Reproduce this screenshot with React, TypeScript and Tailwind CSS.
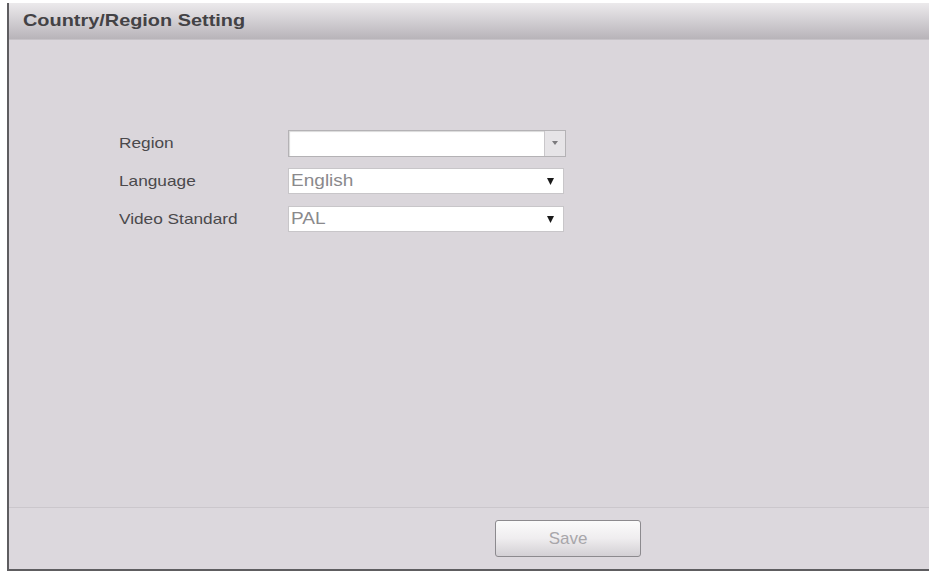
import React from "react";

function Tri({ color, w, h }: { color: string; w: number; h: number }) {
  return (
    <svg width={w} height={h} viewBox={`0 0 ${w} ${h}`}>
      <polygon points={`0,0 ${w},0 ${w / 2},${h}`} fill={color} />
    </svg>
  );
}

export default function App() {
  return (
    <div
      className="w-[929px] h-[571px] bg-white pt-[3px] pl-[7px] overflow-hidden"
      style={{ fontFamily: '"Liberation Sans", Arial, sans-serif' }}
    >
      <div className="h-[568px] flex flex-col border-l-2 border-b-2 border-[#5e5d60]">
        {/* Header */}
        <div className="h-[37px] flex items-center pl-[14px] bg-gradient-to-b from-[#eceaec] via-[#d2cfd3] to-[#b8b4b9] border-b border-[#c6c2c7]">
          <span className="inline-block origin-left scale-x-[1.17] text-[17px] font-bold text-[#434245]">
            Country/Region Setting
          </span>
        </div>

        {/* Body */}
        <div className="flex-1 bg-[#dad6db] pt-[90px] pl-[110px] flex flex-col gap-[12px]">
          <div className="flex items-center h-[26px]">
            <span className="w-[169px]">
              <span className="inline-block origin-left scale-x-[1.15] text-[15px] text-[#4a494c]">Region</span>
            </span>
            <div className="flex h-[27px] w-[278px] border border-[#b4b2b5] bg-white">
              <div className="flex-1 border-r border-[#c9c7ca] shadow-[inset_1px_1px_1px_rgba(0,0,0,0.15)]" />
              <div className="w-[20px] bg-[#e6e4e7] flex items-center justify-center">
                <Tri color="#7b7a7d" w={6} h={4} />
              </div>
            </div>
          </div>
          <div className="flex items-center h-[26px]">
            <span className="w-[169px]">
              <span className="inline-block origin-left scale-x-[1.15] text-[15px] text-[#4a494c]">Language</span>
            </span>
            <div className="flex items-center h-[26px] w-[276px] border border-[#c8c6c9] bg-white pl-[2px] pr-[9px]">
              <span className="flex-1">
                <span className="inline-block origin-left scale-x-[1.12] text-[17px] text-[#8a898c]">English</span>
              </span>
              <Tri color="#1a1a1a" w={7} h={7} />
            </div>
          </div>
          <div className="flex items-center h-[26px]">
            <span className="w-[169px]">
              <span className="inline-block origin-left scale-x-[1.15] text-[15px] text-[#4a494c]">Video Standard</span>
            </span>
            <div className="flex items-center h-[26px] w-[276px] border border-[#c8c6c9] bg-white pl-[2px] pr-[9px]">
              <span className="flex-1">
                <span className="inline-block origin-left scale-x-[1.12] text-[17px] text-[#8a898c]">PAL</span>
              </span>
              <Tri color="#1a1a1a" w={7} h={7} />
            </div>
          </div>
        </div>

        {/* Footer */}
        <div className="h-[62px] bg-[#dcd8dd] border-t border-[#cbc7cc] flex items-center pl-[486px]">
          <button className="w-[146px] h-[37px] rounded-[3px] border border-[#8c8a8e] bg-gradient-to-b from-[#fbfbfb] via-[#efedef] to-[#d3d0d4] text-[17px] text-[#a8a6aa]">
            Save
          </button>
        </div>
      </div>
    </div>
  );
}
